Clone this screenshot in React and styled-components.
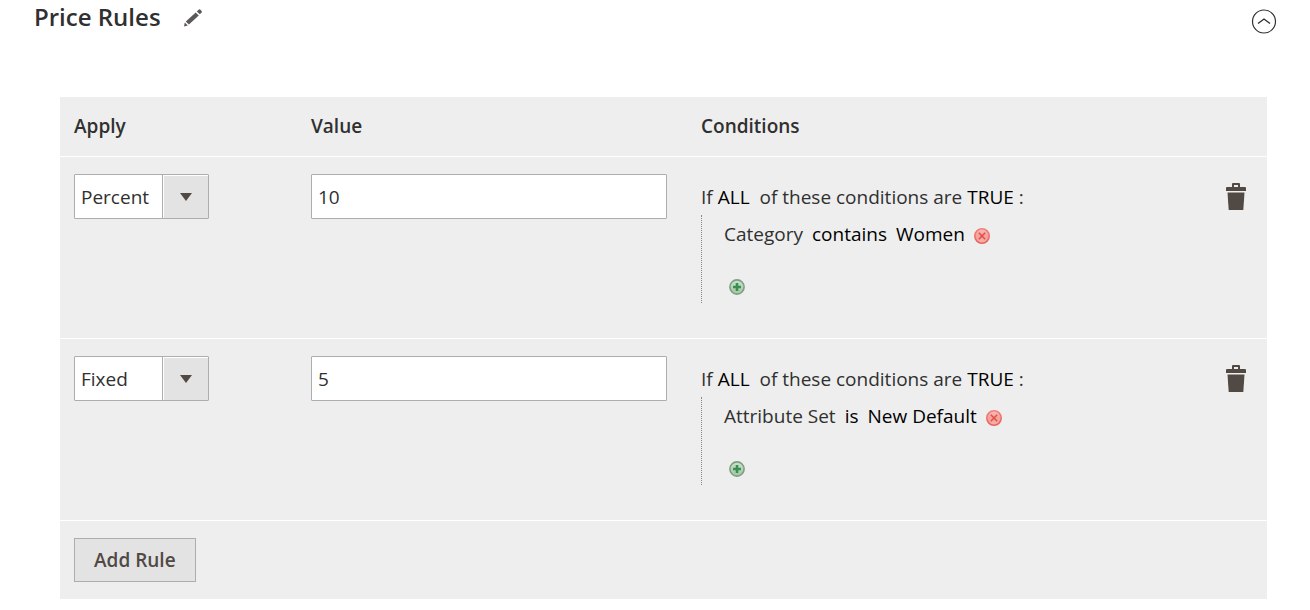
import React, { useState } from "react";
import styled, { createGlobalStyle } from "styled-components";

const GlobalStyle = createGlobalStyle`
  *, *::before, *::after { box-sizing: border-box; }
  body {
    margin: 0;
    background: #fff;
    color: #303030;
    font: 400 19px/26px "Open Sans", "Noto Sans", sans-serif;
  }
  button, input, select { font: inherit; color: inherit; }
`;

const Section = styled.section`
  padding-bottom: 11px;
`;

const SectionHeader = styled.header`
  display: flex;
  align-items: flex-start;
  gap: 22px;
  padding: 0 33px 0 34px;
  height: 97px;
`;

const Title = styled.h2`
  margin: 0;
  font-size: 24px;
  line-height: 34px;
  font-weight: 600;
`;

const IconButton = styled.button`
  display: inline-flex;
  padding: 0;
  border: 0;
  background: none;
  cursor: pointer;
  svg { display: block; }
`;

const EditButton = styled(IconButton)`
  margin-top: 9px;
`;

const CollapseButton = styled(IconButton)`
  margin: 9px 0 0 auto;
`;

const TableWrap = styled.div`
  margin: 0 43px 0 60px;
`;

const Table = styled.table`
  width: 100%;
  table-layout: fixed;
  border-spacing: 0;
  background: #eee;
`;

const Col = styled.col`
  width: ${(p) => p.$width};
`;

const HeadCell = styled.th`
  padding: 16px 14px 17px;
  text-align: left;
  font-weight: 600;
`;

const Cell = styled.td`
  padding: 17px 20px 17px 14px;
  border-top: 1px solid #fff;
  vertical-align: top;
`;

const RuleRow = styled.tr`
  height: 182px;
`;

const SelectBox = styled.div`
  display: grid;
  width: 135px;
  height: 45px;
  border: 1px solid #adadad;
  border-radius: 1px;
  background: #fff;
`;

const Select = styled.select`
  grid-area: 1 / 1;
  width: 100%;
  padding: 0 47px 0 6px;
  border: 0;
  border-radius: 0;
  appearance: none;
  background: transparent;
`;

const SelectArrow = styled.span`
  grid-area: 1 / 1;
  justify-self: end;
  display: flex;
  align-items: center;
  justify-content: center;
  width: 45px;
  border: solid #fff;
  border-width: 1px 0 0 1px;
  background: #e3e3e3;
  box-shadow: -1px 0 0 #adadad;
  pointer-events: none;
`;

const TextInput = styled.input`
  display: block;
  width: 100%;
  height: 45px;
  padding: 0 6px;
  border: 1px solid #adadad;
  border-radius: 1px;
  background: #fff;
`;

const Sentence = styled.div`
  display: flex;
  align-items: center;
  gap: 5px;
  padding-top: 10px;
  white-space: pre;
`;

const Param = styled.a`
  color: #000;
  text-decoration: none;
`;

const ConditionList = styled.ul`
  margin: 5px 0 0;
  padding: 0 0 0 22px;
  height: 88px;
  border-left: 1px dotted #888;
  list-style: none;
`;

const ConditionItem = styled.li`
  display: flex;
  align-items: center;
  gap: 9px;
  padding-top: ${(p) => (p.$add ? "32px" : "6px")};
  padding-left: ${(p) => (p.$add ? "5px" : "0")};
`;

const BadgeButton = styled(IconButton)`
  margin-top: 4px;
`;

const ActionCell = styled(Cell)`
  padding: 26px 21px 0 0;
  text-align: right;
`;

const AddButton = styled.button`
  display: block;
  height: 44px;
  padding: 0 19px;
  border: 1px solid #adadad;
  background: #e3e3e3;
  color: #514943;
  font-weight: 600;
  cursor: pointer;
`;

const PencilIcon = () => (
  <svg width="20" height="18" viewBox="0 0 20 18" fill="#5c5855" aria-hidden="true">
    <path d="M1 17.5 1.8 13.6 4.8 16.4Z" />
    <path d="M2.8 12.6 12.7 3.4 15.8 6.4 5.9 15.6Z" />
    <path d="M13.8 2.4 15.9.5Q16.5 0 17.1.6L18.6 2.1Q19.2 2.8 18.6 3.5L16.8 5.3Z" />
  </svg>
);

const CollapseIcon = () => (
  <svg width="26" height="26" viewBox="0 0 26 26" fill="none" stroke="#303030" aria-hidden="true">
    <circle cx="13" cy="12.5" r="11.5" strokeWidth="1.2" />
    <path d="M7 14.5 13 10 19 14.5" strokeWidth="1.4" />
  </svg>
);

const TrashIcon = () => (
  <svg width="20" height="28" viewBox="0 0 20 28" fill="#514943" aria-hidden="true">
    <path d="M6 4V1Q6 0 7 0H13Q14 0 14 1V4H19Q20 4 20 5V8H0V5Q0 4 1 4ZM8 2V4H12V2Z" fillRule="evenodd" />
    <path d="M1.5 9.5H18.5L17.3 27H2.7Z" />
  </svg>
);

const ArrowIcon = () => (
  <svg width="12" height="8" viewBox="0 0 12 8" fill="#514943" aria-hidden="true">
    <path d="M0 0H12L6 8Z" />
  </svg>
);

const RemoveIcon = () => (
  <svg width="16" height="16" viewBox="0 0 16 16" aria-hidden="true">
    <defs>
      <linearGradient id="removeFill" x2="0" y2="1">
        <stop offset="0" stopColor="#f9bcb8" />
        <stop offset=".5" stopColor="#f6a19b" />
        <stop offset="1" stopColor="#f9b0a8" />
      </linearGradient>
      <linearGradient id="removeRim" x2="0" y2="1">
        <stop offset="0" stopColor="#f0817d" />
        <stop offset="1" stopColor="#e5625c" />
      </linearGradient>
    </defs>
    <circle cx="8" cy="8" r="7.2" fill="url(#removeFill)" stroke="url(#removeRim)" strokeWidth="1.6" />
    <path d="M4.8 4.8 11.2 11.2M11.2 4.8 4.8 11.2" stroke="#e04e49" strokeWidth="1.5" />
  </svg>
);

const PlusIcon = () => (
  <svg width="16" height="16" viewBox="0 0 16 16" aria-hidden="true">
    <defs>
      <linearGradient id="plusFill" x2="0" y2="1">
        <stop offset="0" stopColor="#d0e0cf" />
        <stop offset="1" stopColor="#a3c6a2" />
      </linearGradient>
    </defs>
    <circle cx="8" cy="8" r="7.1" fill="url(#plusFill)" stroke="#7d9f80" strokeWidth="1.6" />
    <path d="M8 4V12M4 8H12" stroke="#369153" strokeWidth="2.6" />
  </svg>
);

const initialRules = [
  { id: 1, apply: "Percent", value: "10", attribute: "Category", operator: "contains", target: "Women" },
  { id: 2, apply: "Fixed", value: "5", attribute: "Attribute Set", operator: "is", target: "New Default" },
];

function Rule({ rule, onChange, onDelete }) {
  return (
    <RuleRow>
      <Cell>
        <SelectBox>
          <Select
            aria-label="Apply"
            value={rule.apply}
            onChange={(e) => onChange({ ...rule, apply: e.target.value })}
          >
            <option>Percent</option>
            <option>Fixed</option>
          </Select>
          <SelectArrow><ArrowIcon /></SelectArrow>
        </SelectBox>
      </Cell>
      <Cell>
        <TextInput
          aria-label="Value"
          value={rule.value}
          onChange={(e) => onChange({ ...rule, value: e.target.value })}
        />
      </Cell>
      <Cell>
        <Sentence>
          <span>If</span>
          <Param href="#all">ALL</Param>
          <span> of these conditions are</span>
          <Param href="#true">TRUE</Param>
          <span>:</span>
        </Sentence>
        <ConditionList>
          <ConditionItem>
            <span>{rule.attribute}</span>
            <Param href="#operator">{rule.operator}</Param>
            <Param href="#value">{rule.target}</Param>
            <BadgeButton type="button" aria-label="Remove condition"><RemoveIcon /></BadgeButton>
          </ConditionItem>
          <ConditionItem $add>
            <IconButton type="button" aria-label="Add condition"><PlusIcon /></IconButton>
          </ConditionItem>
        </ConditionList>
      </Cell>
      <ActionCell>
        <IconButton type="button" aria-label="Delete rule" onClick={onDelete}><TrashIcon /></IconButton>
      </ActionCell>
    </RuleRow>
  );
}

export default function App() {
  const [rules, setRules] = useState(initialRules);
  const [open, setOpen] = useState(true);
  const update = (next) => setRules(rules.map((r) => (r.id === next.id ? next : r)));
  const add = () => setRules([...rules, { ...initialRules[0], id: Date.now() }]);

  return (
    <>
      <GlobalStyle />
      <Section>
        <SectionHeader>
          <Title>Price Rules</Title>
          <EditButton type="button" aria-label="Edit title"><PencilIcon /></EditButton>
          <CollapseButton type="button" aria-label="Toggle section" aria-expanded={open} onClick={() => setOpen(!open)}>
            <CollapseIcon />
          </CollapseButton>
        </SectionHeader>
        {open && (
          <TableWrap>
            <Table>
              <colgroup>
                <Col $width="237px" />
                <Col $width="390px" />
                <Col $width="auto" />
                <Col $width="60px" />
              </colgroup>
              <thead>
                <tr>
                  <HeadCell scope="col">Apply</HeadCell>
                  <HeadCell scope="col">Value</HeadCell>
                  <HeadCell scope="col" colSpan={2}>Conditions</HeadCell>
                </tr>
              </thead>
              <tbody>
                {rules.map((r) => (
                  <Rule
                    key={r.id}
                    rule={r}
                    onChange={update}
                    onDelete={() => setRules(rules.filter((x) => x.id !== r.id))}
                  />
                ))}
              </tbody>
              <tfoot>
                <tr>
                  <Cell colSpan={4}><AddButton type="button" onClick={add}>Add Rule</AddButton></Cell>
                </tr>
              </tfoot>
            </Table>
          </TableWrap>
        )}
      </Section>
    </>
  );
}
